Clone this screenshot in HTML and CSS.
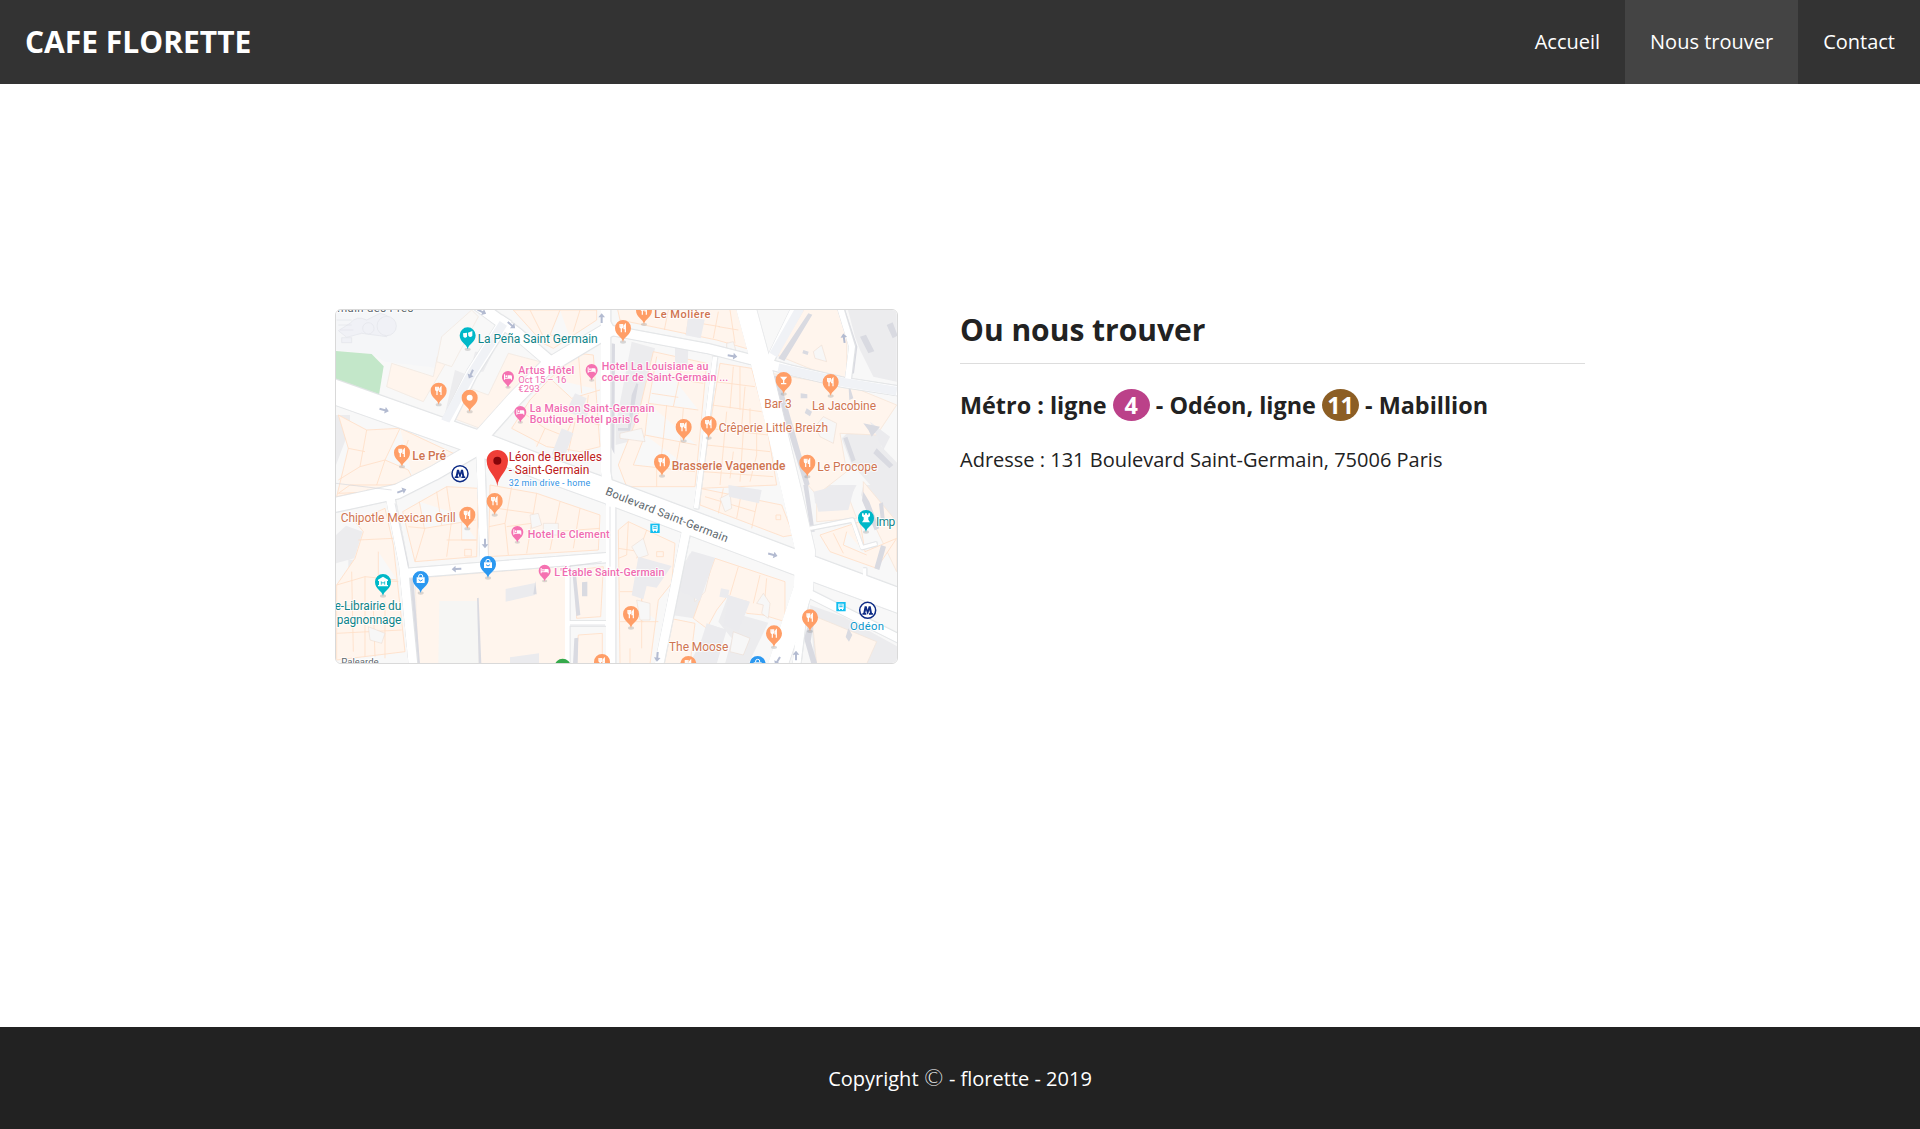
FILE: index.html
```html
<!DOCTYPE html>
<html lang="fr">
<head>
<meta charset="utf-8">
<title>Cafe Florette</title>
<link rel="stylesheet" href="styles.css">
</head>
<body>
<header class="topbar">
  <a class="brand">CAFE FLORETTE</a>
  <nav class="menu">
    <a class="menu-link">Accueil</a>
    <a class="menu-link active">Nous trouver</a>
    <a class="menu-link">Contact</a>
  </nav>
</header>
<main class="content">
  <div class="map">
  <svg viewBox="18 15 1683 1059" preserveAspectRatio="none" aria-label="Plan du quartier">
    <defs>
      <g id="pin"><ellipse cy="42" rx="9" ry="5" fill="#888" opacity=".3"/><path d="M0 42C-2 26-24 22-24 0a24 24 0 0 1 48 0C24 22 2 26 0 42Z"/></g>
      <g id="food"><use href="#pin" fill="#ff9e67"/><path d="M-9-12v8q0 4 4 4t4-4v-8M-5-12V13M7 13V-11q-5 4-4 13h4" fill="none" stroke="#fff" stroke-width="3.6"/></g>
      <g id="bed"><ellipse cy="31" rx="8" ry="4" fill="#888" opacity=".3"/><path d="M0 32C-2 20-18 16-18 0a18 18 0 0 1 36 0C18 16 2 20 0 32Z" fill="#f571b1"/><path d="M-12-8h3V2H-1V-5H8q4 0 4 4V8H9V5H-9V8h-3Z" fill="#fff"/><circle cx="-5" cy="-2.500" r="2.800" fill="#fff"/></g>
      <g id="shop"><use href="#pin" fill="#2b98f0"/><path d="M-12-5h24v17h-24z" fill="#fff"/><path d="M-6-5v-4q0-5 6-5t6 5v4" fill="none" stroke="#fff" stroke-width="3"/><path d="M-6 2q6 8 12 0" fill="none" stroke="#2b98f0" stroke-width="3"/></g>
      <g id="arrow"><path d="M-14-3H3v-7L15 0 3 10V3h-17z" fill="#b3bbd1"/></g>
      <g id="metro"><circle r="24" fill="#fff" stroke="#0d2b85" stroke-width="4.500"/><path d="M-16 13V9l3-1 4-20h6L0-1l3-11h6l4 20 3 1v4H4V9l3-1-2-9-4 13h-2l-4-13-2 9 3 1v4z" fill="#0d2b85"/></g>
      <g id="bus"><path d="M-14-14h28v28h-28z" fill="#14bff0"/><path d="M-8-9H8V7H6v3H3V7h-6v3h-3V7h-2z" fill="#fff"/><path d="M-5-5H5M-5 0H5" stroke="#14bff0" stroke-width="3"/></g>
      <g id="roads">
        <path d="M0 256L420 405 640 490 840 562 1400 773 1720 892" stroke-width="72"/>
        <path d="M1240-20L1290 165 1385 560 1426 740 1420 850 1340 1090" stroke-width="56"/>
        <path d="M430 420L560 275 650 185 850 65" stroke-width="44"/>
        <path d="M430-10L560 85 665 175" stroke-width="34"/>
        <path d="M345 365L425 205 530 40" stroke-width="34"/>
        <path d="M827-20L827 500 842 600V1090" stroke-width="28"/>
        <path d="M0 603L200 560 310 505 440 430" stroke-width="42"/>
        <path d="M180 575L220 780 250 1090" stroke-width="26"/>
        <path d="M225 805L480 785 840 757" stroke-width="28"/>
        <path d="M451 450L463 785" stroke-width="24"/>
        <path d="M820 72L1130 130 1280 168 1380 195 1540 232 1720 260" stroke-width="28"/>
        <path d="M1410-20L1320 165" stroke-width="24"/>
        <path d="M1528 0L1566 125 1552 238" stroke-width="18"/>
        <path d="M1155 155L1110 520 1098 610" stroke-width="14"/>
        <path d="M1070 670L985 1090" stroke-width="26"/>
        <path d="M1415 855L1720 1008" stroke-width="24"/>
        <path d="M1425 870L1398 1090" stroke-width="24"/>
        <path d="M712 780V1090M712 955H840" stroke-width="14"/>
        <path d="M1440 670L1567 645 1596 728 1640 716M1604 790v24" stroke-width="10"/>
      </g>
    </defs>
    <rect width="1720" height="1090" fill="#f8f8f8"/>

    <!-- paved and shaded blocks -->
    <g fill="#ececee">
      <path d="M30 15H420L330 190 165 170 125 147 18 135V15Z" fill="#f5f6f8"/>
      <path d="M18 330H60V370L18 480ZM375 195l60 24-60 130-30-24ZM435 140h55l-30 60h-40ZM18 690l30-28 50 18-25 80-55 15ZM55 764h54v48H55Z"/>
      <path d="M905 110l70 20-20 90-30 110-30 80-38 10 0-60ZM1155 250l30 4v24h-30ZM1220 305l22 60-30 14ZM1550 0h150v230l-70-15-40-80-15-40ZM1535 400l50-45 60 20 10 50 48 50v90h-60l-80-90Z"/>
      <path d="M1080 745l75 15-40 125-25 55-65-10 30-140ZM1195 870l65 20-40 60-15 50-40-50ZM1125 955l60 18-35 104h-80l60-70ZM1225 928l90 25-60 124h-70ZM1450 540h130l-40 75-85-20ZM1600 540h103v130l-65-20-45-80ZM1440 900l100 35 163 90v52h-250Z"/>
    </g>
    <path d="M18 138L125 147 161 184 146 276 18 229Z" fill="#c3e7c9"/>

    <!-- buildings -->
    <g fill="#fff5ed" stroke="#ffdfc6" stroke-width="2.500" stroke-linejoin="round">
      <path d="M185 175L310 215 322 155 350 170 280 290 170 245Z" stroke="#f2e9e2"/>
      <path d="M335 95l90-80 20 20-80 150-45-15Z" stroke="#f2e9e2" fill="#faf8f6"/>
      <path d="M535 145L630 170 520 290 450 370 370 340 420 250 475 270Z" stroke="#f2e9e2"/>
      <path d="M550 15H800V45L670 130 640 115ZM600 15l40 80M690 15l-30 75 60 10M750 15l-20 65"/>
      <path d="M545 370L600 285 660 220 745 145 790 150 810 425 750 440 690 430 650 425ZM575 320l70 50-25 55M660 220l65 60 85-25M690 430l40-90 80 20M735 350l-20 90M745 145l10 120M645 370l50 20M775 270l-10 85"/>
      <path d="M25 330L110 375 210 370 370 445 250 525 20 575 55 430ZM110 375l-20 110-65 40M210 370l-45 95 70 30 15 30M90 485l75-20M165 465l-25 75M55 430l50 10M235 405l-25 75"/>
      <path d="M25 565L60 540H190L100 562Z"/>
      <path d="M75 650L165 610 190 720 225 1040 20 1065V840L75 760 100 680ZM85 705L190 700M20 840l85-25 95 10M65 800l5 240M105 815v240M20 900l185 10M145 740v85l60 5M130 910l5 145M20 985l195-10M165 890v170"/>
      <path d="M218 620L350 545 445 550 440 755 255 770ZM268 590l15 80 155-25M350 545l15 100M235 665l50 5M285 670l-30 100M365 645l-15 110M395 645v60h45M350 705h90M404 733h20v20h-20ZM320 560l15 100"/>
      <path d="M480 540L620 565 810 630 805 735 475 755ZM545 545l-20 110-48 10M620 565l-15 90-75 10M525 655l10 95M605 655l-15 90M690 590l-30 145M750 610l-20 120M590 680l80 10M670 680l140-10M500 610l110 15"/>
      <path d="M255 820L445 805 710 782 707 1077H265L255 820Z" stroke="#f7ebe1"/>
      <path d="M735 795L820 785 812 935 740 940ZM745 990L817 985V1077H735Z"/>
      <path d="M860 0H1235L1265 135 1160 105 870 45ZM1015 15l-12 60M1080 15l-12 75M1165 20l-15 80M1200 15l15 100M1080 50l90 15M1165 65l60 10"/>
      <path d="M970 140L1130 175 1095 545 890 545 865 480 925 330ZM980 155l-25 140 150 20M1060 165l-30 140M955 295l-10 95 155 30M1010 300l-10 100M1060 310l-8 100M945 390l-35 90 185 20M1000 400l-10 90M1050 410l-15 85M980 480v65M990 215l130 20M965 265l80 12"/>
      <path d="M1170 175L1265 190 1310 360 1340 540 1110 550ZM1155 230l120 15M1145 300l150 20M1135 370l180 20M1130 420l190 20M1120 500l210 15M1210 185l-10 125M1245 245l-10 120M1190 320l-10 110M1240 380l-10 150M1180 430l-10 110M1280 380v70l-20 80M1230 185v130M1260 310v70M1210 440l-10 80"/>
      <path d="M1340 150L1430 0H1520L1550 100 1550 225 1450 195Z" stroke="#f6e6d9"/>
      <path d="M1325 205L1520 240 1590 255 1700 300 1640 390 1530 385 1550 500 1460 570 1425 530Z" stroke="#f6e6d9"/>
      <path d="M1460 560L1550 560 1580 640 1460 650ZM1600 530L1700 650V800L1600 590Z" stroke="#f6e6d9"/>
      <path d="M1470 690L1590 650 1605 740 1700 700 1640 790 1500 740ZM1510 685l30 60M1550 680l-10 40 70 30"/>
      <path d="M1110 550L1355 600 1390 690 1360 695 1110 600ZM1180 550l-15 75M1235 560l-15 80M1285 575l-20 95M1125 575l150 45M1338 630h14v14h-14Z"/>
      <path d="M865 675L895 650 1035 715 1025 835 985 885 960 1077H870ZM895 650l-5 100-25 10M950 675l-30 85M980 740h20v15h-20ZM870 860h65v90h50M935 860v170M870 950h70M900 1030v47M865 730l65 10"/>
      <path d="M1155 760L1365 830 1365 950 1300 930 1250 925 1195 870 1160 915 1130 970 1090 940ZM1225 785l-25 85M1290 810l-20 85M1170 870l85 20M1310 820l-10 110M1020 940l75 15-15 122h-85Z"/>
      <path d="M1445 930L1640 1010 1610 1077H1460Z" stroke="#f2e6dc"/>
    </g>
    <!-- courtyards -->
    <g fill="#f7f7f7" stroke="#ead9cc" stroke-width="1.500">
      <path d="M600 630l25-5 10 35-30 10ZM640 655h45v35h-45ZM110 555h50v28h-50ZM115 965l50 20-10 30-35-10ZM1300 865l20 30-5 45-20-15 5-25-20-5ZM1100 815l40-15-15 60-30 30-5-30ZM1170 580l30-15 5 45-20 10ZM905 725l35-25 15 50-30 10ZM920 885l40 10v50h-30ZM1210 980l50 20-20 50-40-10Z"/>
      <path d="M870 385l65-15 10 40-75-10ZM1190 115l20-5 10 35-30 5ZM1455 365l25-30 40 20-10 60-40-20ZM1450 140l25-20 15 50-35-10Z"/>
    </g>
    <g fill="#ebebee"><path d="M695 370l35 15-30 80-35-18ZM735 265l35 15-12 30 20 5-10 25-60-20ZM1074 36l50 8-12 56-45-9ZM1035 118l40 8-2 55-38-8ZM1173 850l25 5-5 25-25-5ZM925 755l100 28-45 65-30-5-10 40-35-12ZM1085 738l70 20-45 130-70-35ZM527 890l88-20v-36l-88 18ZM540 1057l87-12v32h-87ZM1450 560l80-20h45l-20 75-90 5ZM1620 350l60 45-20 40ZM1195 870l65 20-35 90-45-20ZM1130 955l60 20-30 102h-80l35-75ZM1195 540l100 15-8 40-90-20Z"/></g>
    <path d="M328 888h115l3 189H325Z" fill="#f6f6f4"/>
    <g fill="#d9dae1">
      <path d="M441 880l5-2 8 199h-8ZM238 820l12-3 20 260h-16ZM727 800l10-2 14 132-12 3ZM733 1000l12-2-2 79h-14ZM1325 215l20-5 94 328-14 8ZM1434 540l20 140h-12l-22-140ZM1345 160l90-135 12 4-84 139ZM1530 18l16-3 36 110-10 80-14 5 8-80ZM1422 1000l20-65 12 4-12 70 20 68h-18ZM845 115l10 2-2 330-10-20ZM756 832l16-2v44h-16Z"/>
      <path d="M1590 95l25 50 18-6-25-50ZM1670 60l18-8 15 40-15 8ZM1600 355l50 10-25 30-10-20ZM1540 400l12-5 25 70-12 6ZM1640 430l50 50-12 10-48-45ZM1555 230l15 50-12 5ZM1412 265l20 3v12h-20ZM1430 310l16 10-6 14-16-10ZM1420 135l16 5-3 10-16-5ZM1647 596l12-4 5 50-12-2ZM1600 560l18 30 30 80-14 6-38-90ZM1633 790l20-70 15 5-20 70ZM1555 970l12 20-10 20-10-14ZM610 868l6-40 4 40ZM905 270l14-35 6 2-25 140h-36v-8h30Z"/>
    </g>
    <g fill="#f0f1f6" stroke="#e3e4ea" stroke-width="2"><path d="M60 55q20-25 50-10l40-20q35 5 45 40l-25 30-75-10-45 12-25-20Z"/><circle cx="170" cy="63" r="29"/><circle cx="115" cy="70" r="17"/><path d="M20 45h45M25 60h40M30 75h40M35 98h30v15H35Z"/></g>

    <g fill="none" stroke-linejoin="round">
      <use href="#roads" class="road-edge"/>
      <use href="#roads" stroke="#fff"/>
      <path d="M345 350L425 205 520 55M1410 10L1330 150M1345 188L1540 232 1700 258" stroke="#f0f2f6" stroke-width="26"/>
      <path d="M0 256L420 405 640 490 840 562 1400 773 1720 892M1240-20L1290 165 1385 560 1426 740 1420 850 1340 1090" stroke="#fff" stroke-width="58"/>
    </g>
    <g stroke="#d7d8dc" stroke-width="2" fill="none"><path d="M18 535L185 555M195 595L235 785M840 605v180M715 785l100-15M720 960h105"/></g>

    <use href="#arrow" transform="translate(162 315) rotate(15)"/>
    <use href="#arrow" transform="translate(423 207) rotate(115)"/>
    <use href="#arrow" transform="translate(455 20) rotate(25)"/>
    <use href="#arrow" transform="translate(544 60) rotate(40)"/>
    <use href="#arrow" transform="translate(815 40) rotate(-90)"/>
    <use href="#arrow" transform="translate(215 558) rotate(-20)"/>
    <use href="#arrow" transform="translate(465 715) rotate(90)"/>
    <use href="#arrow" transform="translate(380 792) rotate(177)"/>
    <use href="#arrow" transform="translate(1207 153) rotate(8)"/>
    <use href="#arrow" transform="translate(1542 100) rotate(-98)"/>
    <use href="#arrow" transform="translate(1328 749) rotate(15)"/>
    <use href="#arrow" transform="translate(982 1055) rotate(95)"/>
    <use href="#arrow" transform="translate(1343 1068) rotate(120)"/>
    <use href="#arrow" transform="translate(1398 1052) rotate(-90)"/>

    <use href="#pin" x="413" y="91" fill="#00b8c8"/><path d="M399 85l12-2v12q-6 6-11 0ZM414 83l13-5v14q-6 8-12 0Z" fill="#fff"/>
    <use href="#food" x="326" y="257"/>
    <use href="#pin" x="419" y="278" fill="#ff9e67"/><circle cx="419" cy="278" r="9" fill="#fff"/>
    <use href="#food" x="216" y="443"/>
    <use href="#food" x="942" y="16"/>
    <use href="#food" x="879" y="69"/>
    <use href="#pin" x="1361" y="225" fill="#ff9e67"/><path d="M1350 215h22l-9 11v8h6v4h-16v-4h6v-8Z" fill="#fff"/>
    <use href="#food" x="1502" y="231"/>
    <use href="#food" x="1061" y="366"/>
    <use href="#food" x="1136" y="357"/>
    <use href="#food" x="996" y="471"/>
    <use href="#food" x="1432" y="473"/>
    <use href="#food" x="412" y="629"/>
    <use href="#food" x="494" y="588"/>
    <use href="#food" x="903" y="927"/>
    <use href="#food" x="1332" y="985"/>
    <use href="#food" x="1440" y="937"/>
    <use href="#food" x="816" y="1071"/>
    <use href="#food" x="1075" y="1077"/>
    <use href="#shop" x="272" y="822"/>
    <use href="#shop" x="474" y="777"/>
    <use href="#shop" x="1283" y="1077"/>
    <use href="#pin" x="698" y="1085" fill="#35a94b"/>
    <use href="#pin" x="159" y="831" fill="#00b8c8"/><path d="M144 828v-4l15-9 15 9v4h-3v12h3v4h-30v-4h3v-12Z" fill="#fff"/><path d="M154 839v-9l5 5 5-5v9" fill="none" stroke="#00b8c8" stroke-width="2.500"/>
    <use href="#pin" x="1608" y="639" fill="#00b8c8"/><path d="M1596 625h5v4h4v-4h6v4h4v-4h5v9l-5 3v7l5 8h-24l5-8v-7l-5-3Z" fill="#fff"/>
    <use href="#bed" x="534" y="216"/>
    <use href="#bed" x="785" y="195"/>
    <use href="#bed" x="571" y="321"/>
    <use href="#bed" x="562" y="681"/>
    <use href="#bed" x="644" y="797"/>
    <use href="#metro" x="390" y="506"/>
    <use href="#metro" x="1613" y="916"/>
    <use href="#bus" x="975" y="670"/>
    <use href="#bus" x="1533" y="905"/>
    <path d="M502 544C500 512 470 500 470 467a32 32 0 0 1 64 0C534 500 504 512 502 544Z" fill="#ef3e37"/><circle cx="502" cy="467" r="12" fill="#84050a"/>

    <g class="label street">
      <text x="22" y="22" textLength="228">main des Prés</text>
      <text x="34" y="1080" textLength="112" style="font-size:29px">Palearde</text>
      <text transform="translate(824 568) rotate(21.500)" textLength="392">Boulevard Saint-Germain</text>
    </g>
    <g class="label teal">
      <text x="443" y="115" textLength="360">La Peña Saint Germain</text>
      <text x="14" y="915" textLength="200">e-Librairie du</text>
      <text x="20" y="956" textLength="194">pagnonnage</text>
      <text x="1638" y="662" textLength="58">Imp</text>
    </g>
    <g class="label pink">
      <text x="565" y="206" textLength="168">Artus Hôtel</text>
      <text class="thin" x="565" y="234" textLength="144">Oct 15 – 16</text>
      <text class="thin" x="565" y="262" textLength="64">€293</text>
      <text x="815" y="195" textLength="320">Hotel La Louisiane au</text>
      <text x="815" y="227" textLength="380">coeur de Saint-Germain ...</text>
      <text x="599" y="321" textLength="374">La Maison Saint-Germain</text>
      <text x="599" y="355" textLength="329">Boutique Hotel paris 6</text>
      <text x="593" y="698" textLength="246">Hotel le Clement</text>
      <text x="673" y="812" textLength="330">L'Étable Saint-Germain</text>
    </g>
    <g class="label brown">
      <text x="247" y="466" textLength="101" class="strong">Le Pré</text>
      <text x="973" y="40" textLength="168" class="strong" style="font-size:33px">Le Molière</text>
      <text x="1303" y="309" textLength="82">Bar 3</text>
      <text x="1446" y="315" textLength="192">La Jacobine</text>
      <text x="1166" y="381" textLength="328">Crêperie Little Breizh</text>
      <text x="1025" y="495" textLength="341" class="strong">Brasserie Vagenende</text>
      <text x="1462" y="497" textLength="180">Le Procope</text>
      <text x="32" y="652" textLength="345">Chipotle Mexican Grill</text>
      <text x="1017" y="1039" textLength="178">The Moose</text>
    </g>
    <g class="label red">
      <text x="536" y="468" textLength="280">Léon de Bruxelles</text>
      <text x="536" y="508" textLength="242">- Saint-Germain</text>
    </g>
    <text class="label blue" x="536" y="543" textLength="245">32 min drive - home</text>
    <text class="label station" x="1560" y="974" textLength="102">Odéon</text>
  </svg>
  </div>
  <section class="info">
    <h2 class="title">Ou nous trouver</h2>
    <h3 class="metro">Métro : ligne <span class="line line-4">4</span> - Odéon, ligne <span class="line line-11">11</span> - Mabillion</h3>
    <p class="address">Adresse : 131 Boulevard Saint-Germain, 75006 Paris</p>
  </section>
</main>
<footer class="footer"><p>Copyright <span class="copy">©</span> - florette - 2019</p></footer>
</body>
</html>
```
FILE: styles.css
```css
* { box-sizing: border-box; margin: 0; padding: 0; }
body {
  min-height: 1129px;
  display: flex;
  flex-direction: column;
  font: 20px/1.5 "Open Sans", sans-serif;
  color: #222;
  background: #fff;
}
.topbar {
  height: 84px;
  display: flex;
  justify-content: space-between;
  background: #333;
  color: #fff;
}
.brand { padding-left: 25px; font-size: 30px; font-weight: 700; line-height: 84px; }
.menu { display: flex; }
.menu-link { padding: 0 25px; line-height: 84px; }
.active { background: #444; }
.content {
  flex: 1;
  width: 1250px;
  margin: 0 auto;
  padding-top: 225px;
  display: flex;
  justify-content: space-between;
  align-items: flex-start;
}
.map {
  width: 563px;
  height: 355px;
  overflow: hidden;
  border: 1px solid #d9d9d9;
  border-radius: 6px;
}
.map svg { display: block; width: 100%; height: 100%; }
.road-edge { stroke: #e0e2e4; filter: drop-shadow(0 2px 0 #e2e4e6) drop-shadow(0 -2px 0 #e2e4e6) drop-shadow(2px 0 0 #e2e4e6); }
.label {
  font-family: Roboto, sans-serif;
  font-size: 34px;
  paint-order: stroke;
  stroke: #fff;
  stroke-opacity: .8;
  stroke-width: 6px;
  stroke-linejoin: round;
}
.street { fill: #5c666c; }
.teal { fill: #108489; font-size: 36px; }
.pink { fill: #f06bb0; font-size: 32px; font-weight: 500; }
.thin { font-size: 29px; font-weight: 400; }
.brown { fill: #cf7450; font-size: 36px; }
.strong { font-weight: 500; }
.red { fill: #bd2020; font-size: 36px; }
.blue { fill: #2f93e5; font-size: 27px; }
.station { fill: #0c9ace; }
.info { width: 625px; }
.title { height: 55px; font-size: 30px; line-height: 41px; border-bottom: 1px solid #ddd; }
.metro { margin-top: 21px; font-size: 23.4px; line-height: 40px; white-space: nowrap; }
.line {
  display: inline-block;
  width: 37px;
  height: 32px;
  line-height: 32px;
  text-align: center;
  color: #fff;
  border-radius: 50%;
}
.line-4 { background: #bb4189; }
.line-11 { background: #8c5e24; }
.address { margin-top: 20px; }
.footer {
  height: 102px;
  padding-top: 2px;
  display: flex;
  align-items: center;
  justify-content: center;
  background: #222;
  color: #fff;
}
.copy {
  display: inline-flex;
  justify-content: center;
  width: 20px;
  font-family: "DejaVu Sans", sans-serif;
  font-size: 23px;
  font-weight: 200;
  line-height: 0;
}
```
